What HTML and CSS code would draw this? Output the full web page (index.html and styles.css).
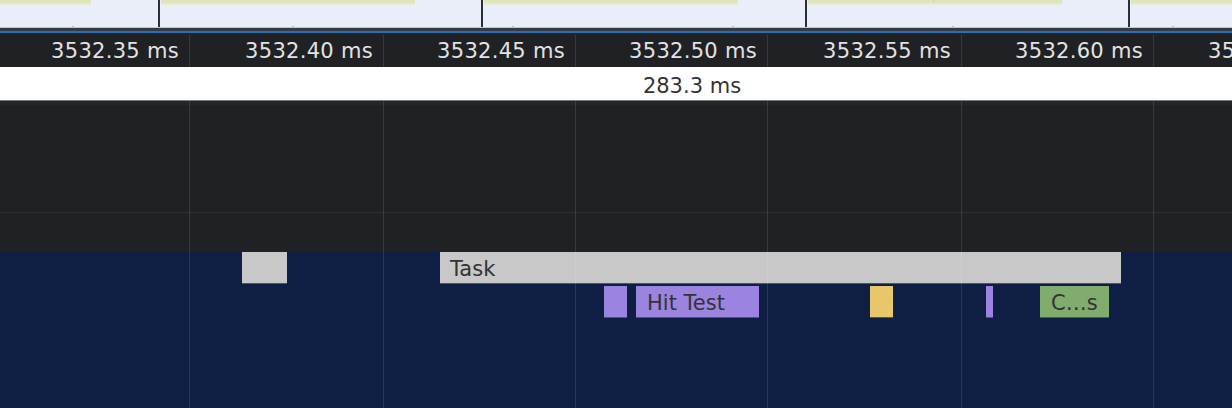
FILE: index.html
```html
<!DOCTYPE html>
<html lang="en">
<head>
<meta charset="utf-8">
<title>Performance timeline</title>
<link rel="stylesheet" href="styles.css">
</head>
<body>
<div class="page">
  <div class="overview">
    <div class="seg"><div class="stripe stripe-first"></div></div>
    <div class="divider"></div>
    <div class="seg"><div class="stripe"></div></div>
    <div class="divider"></div>
    <div class="seg"><div class="stripe"></div></div>
    <div class="divider"></div>
    <div class="seg"><div class="stripe stripe-split"></div></div>
    <div class="divider"></div>
    <div class="seg"><div class="stripe"></div></div>
  </div>
  <div class="band"></div>
  <div class="accent"></div>
  <div class="ruler cols">
    <div class="tick">3532.35 ms</div>
    <div class="tick">3532.40 ms</div>
    <div class="tick">3532.45 ms</div>
    <div class="tick">3532.50 ms</div>
    <div class="tick">3532.55 ms</div>
    <div class="tick">3532.60 ms</div>
    <div class="tick">3532.65 ms</div>
  </div>
  <div class="range"><span class="range-label">283.3 ms</span></div>
  <div class="tracks">
    <div class="dark">
      <div class="dark-row dark-row-top"></div>
      <div class="dark-row dark-row-bottom"></div>
    </div>
    <div class="flame">
      <div class="bar bar-task row1" style="left:242px;width:45px"></div>
      <div class="bar bar-task row1 labelled" style="left:440px;width:681px">Task</div>
      <div class="bar bar-purple row2" style="left:604px;width:23px"></div>
      <div class="bar bar-purple row2 labelled" style="left:636px;width:123px">Hit Test</div>
      <div class="bar bar-yellow row2" style="left:870px;width:23px"></div>
      <div class="bar bar-purple row2" style="left:986px;width:7px"></div>
      <div class="bar bar-green row2 labelled" style="left:1040px;width:69px">C…s</div>
    </div>
    <div class="gridlines cols">
      <div></div><div></div><div></div><div></div><div></div><div></div><div></div>
    </div>
  </div>
</div>
</body>
</html>
```

FILE: styles.css
```css
* { box-sizing: border-box; }

html, body {
  margin: 0;
  padding: 0;
  width: 1232px;
  height: 408px;
  overflow: hidden;
  background: #0e1f43;
}

.page {
  width: 1232px;
  height: 408px;
  overflow: hidden;
  font-family: "DejaVu Sans", "Liberation Sans", sans-serif;
}

/* overview strip */
.overview {
  display: grid;
  grid-template-columns: 158px 2px 321px 2px 322px 2px 321px 2px 1fr;
  height: 28px;
  background-color: #eaeef8;
  background-image:
    linear-gradient(#c2c6ce, #c2c6ce),
    repeating-linear-gradient(90deg, transparent 0 72px, #b4b8c1 72px 74px, transparent 74px 220px);
  background-size: 100% 1px, 100% 2px;
  background-position: 0 100%, 0 100%;
  background-repeat: no-repeat;
}

.seg { position: relative; }

.stripe {
  height: 3px;
  width: 254px;
  margin-left: 1px;
  background: #dfe4bf;
  box-shadow: 0 2px 0 #e6ebd6;
}

.stripe-first { width: 91px; margin-left: 0; }

.stripe-split {
  background-image: linear-gradient(90deg, transparent 125px, #d2d8b6 125px 126px, transparent 126px);
}

.divider { background: #2a2e38; height: 27px; }

.band { height: 3px; background: #373a40; }
.accent { height: 2px; background: #2d6db2; }

/* shared column layout for time gridlines */
.cols {
  display: grid;
  grid-template-columns: 189px 194px 192px 192px 194px 192px 193px;
  width: 1346px;
}

.cols > * + * { border-left: 1px solid rgba(255, 255, 255, 0.11); }

/* ruler */
.ruler {
  height: 34px;
  padding-top: 1px;
  background: #202124;
  border-top: 1px solid #26272b;
}

.tick {
  text-align: right;
  padding-right: 10px;
  font-size: 21px;
  line-height: 33px;
  letter-spacing: 0.3px;
  color: #e3e3e3;
  white-space: nowrap;
}

/* range */
.range {
  height: 34px;
  background: #ffffff;
  border-bottom: 1px solid #7a7b7e;
  padding-left: 152px;
  text-align: center;
  font-size: 21px;
  line-height: 33px;
  padding-top: 3px;
  color: #333333;
}

/* tracks */
.tracks {
  position: relative;
  height: 307px;
}

.dark {
  height: 151px;
  background: #202124;
  display: flex;
  flex-direction: column;
}

.dark-row-top {
  height: 112px;
  border-top: 4px solid #242528;
  border-bottom: 1px solid #2e2f33;
}

.dark-row-bottom { flex: 1; }

.flame {
  position: relative;
  height: 156px;
  background: #0e1f43;
}

.bar {
  position: absolute;
  height: 32px;
  font-size: 21px;
  line-height: 31px;
  color: #333333;
  white-space: nowrap;
  overflow: hidden;
  border-bottom: 1px solid #4d5669;
}

.labelled {
  padding-left: 11px;
  padding-top: 2px;
}

.row1 { top: 0; }
.row2 { top: 34px; }

.bar-task { background: #c8c8c8; }
.bar-task.labelled { padding-left: 10px; }
.bar-purple { background: #9b83e0; }
.bar-yellow { background: #e8c66a; }
.bar-green { background: #80ac6e; }

.gridlines {
  position: absolute;
  top: 0;
  left: 0;
  bottom: 0;
  pointer-events: none;
}
```
